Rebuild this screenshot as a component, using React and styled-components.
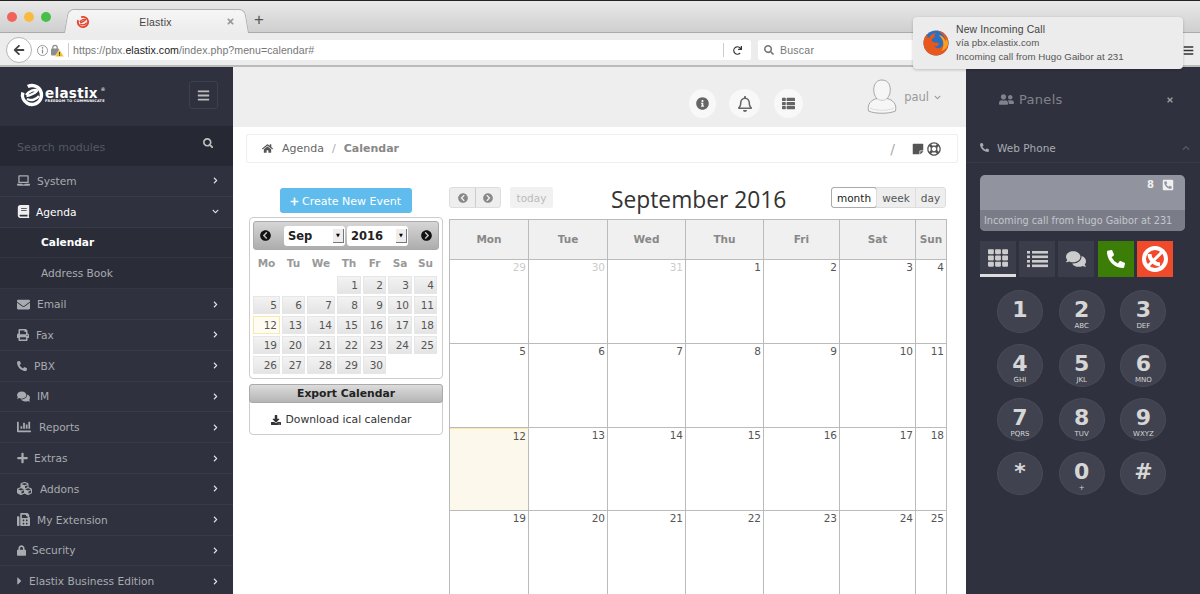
import React from "react";
import styled, { createGlobalStyle } from "styled-components";
import { FaInfoCircle, FaRegBell, FaThList, FaHome, FaLaptop, FaBook, FaEnvelope, FaPrint, FaPhoneAlt, FaComments, FaChartBar, FaPlus, FaCubes, FaLock, FaCaretRight, FaChevronRight, FaChevronDown, FaChevronUp, FaSearch, FaBars, FaUserFriends, FaTimes, FaStickyNote, FaRegLifeRing, FaDownload, FaArrowLeft, FaRedo, FaTh, FaChevronCircleLeft, FaChevronCircleRight, FaPhoneSquareAlt, FaFax } from "react-icons/fa";

const GlobalStyle = createGlobalStyle`
  html, body { margin: 0; padding: 0; height: 594px; overflow: hidden; background: #fff; }
  body { font-family: "DejaVu Sans", Verdana, sans-serif; }
  * { box-sizing: border-box; }
`;

const Page = styled.div`
  width: 1200px; height: 594px; overflow: hidden; display: flex; flex-direction: column; position: relative;
`;
const TabStrip = styled.div`
  height: 33px; flex: none; display: flex; align-items: flex-end; padding-left: 7px;
  background: linear-gradient(#e9e9e9, #cfcfcf); border-top: 1px solid #222; border-bottom: 1px solid #aaa;
`;
const Lights = styled.div`
  display: flex; gap: 7px; align-self: center; margin-right: 19px;
`;
const Light = styled.span`
  width: 10px; height: 10px; border-radius: 50%; background: ${p => p.$c};
`;
const Tab = styled.div`
  width: 173px; height: 24px; margin-bottom: -1px; display: flex; align-items: center; padding: 0 8px 0 6px; position: relative;
  background: linear-gradient(#f6f6f6, #ececec); border-top: 1px solid #b0b0b0; border-radius: 7px 7px 0 0;
  font: 10.5px "Liberation Sans", sans-serif; color: #444;
  &::before, &::after {
    content: ""; position: absolute; top: -1px; bottom: 0; width: 10px; background: linear-gradient(#f6f6f6, #ececec);
    border-top: 1px solid #b0b0b0;
  }
  &::before { left: -4px; transform: skewX(-10deg); border-left: 1px solid #b0b0b0; border-radius: 6px 0 0 0; }
  &::after { right: -4px; transform: skewX(10deg); border-right: 1px solid #b0b0b0; border-radius: 0 6px 0 0; }
`;
const TabIcon = styled.span` display: flex; position: relative; z-index: 1; `;
const TabTitle = styled.span` flex: 1; text-align: center; padding-right: 5px; letter-spacing: .2px; position: relative; z-index: 1; `;
const TabClose = styled.span` color: #999; font-size: 9px; display: flex; position: relative; z-index: 1; `;
const NewTab = styled.span` margin: 0 0 3px 11px; font: 17px "Liberation Sans", sans-serif; color: #555; line-height: 18px; `;
const UrlBar = styled.div`
  height: 34px; flex: none; display: flex; align-items: center; padding: 2px 6px 0; color: #444;
  background: #ececec; border-bottom: 2px solid #bbb;
`;
const BackBtn = styled.div`
  width: 26px; height: 26px; border-radius: 50%; background: #fff; border: 1px solid #b5b5b5; display: flex; align-items: center; justify-content: center; font-size: 12px; color: #444; flex: none; z-index: 1;
`;
const Addr = styled.div`
  width: 725px; height: 20px; margin-left: -6px; background: #fff; display: flex; align-items: center; padding-left: 11px; border-radius: 0 2px 2px 0;
  font: 10.6px "Liberation Sans", sans-serif; color: #777; letter-spacing: .05px; flex: none;
`;
const SiteIcons = styled.span` display: flex; align-items: center; gap: 3px; `;
const LockWrap = styled.span` display: flex; width: 13px; position: relative; `;
const AddrSep = styled.span` width: 1px; height: 14px; background: #ccc; margin: 0 4px 0 4px; `;
const Strong = styled.span` color: #222; `;
const Reload = styled.span` margin-left: auto; display: flex; align-items: center; height: 14px; padding: 0 9px; border-left: 1px solid #ccc; font-size: 9px; color: #333; `;
const SearchBox = styled.div`
  width: 240px; height: 20px; margin-left: 7px; background: #fff; border-radius: 2px; display: flex; align-items: center; gap: 6px; padding-left: 6px; flex: none;
  font: 10.6px "Liberation Sans", sans-serif; color: #777; letter-spacing: .2px;
`;
const MoreMenu = styled.span` margin-left: auto; display: flex; font-size: 11px; color: #333; `;

const Body = styled.div` flex: 1; display: flex; min-height: 0; `;
const Sidebar = styled.aside` width: 233px; flex: none; background: #2f323e; display: flex; flex-direction: column; `;
const LogoRow = styled.div` height: 59px; flex: none; display: flex; align-items: center; justify-content: space-between; padding: 0 15px 3px 19px; `;
const Logo = styled.div` display: flex; align-items: center; gap: 0; color: #fff; `;
const LogoText = styled.div` display: flex; flex-direction: column; font-weight: 700; font-size: 13.5px; line-height: 12px; letter-spacing: .3px; position: relative; `;
const LogoSub = styled.span` font-size: 3.5px; line-height: 4px; letter-spacing: .15px; `;
const LogoReg = styled.sup` position: absolute; right: -1px; top: 0; font-size: 5px; font-weight: 400; line-height: 5px; `;
const Burger = styled.div` width: 29px; height: 28px; border: 1px solid #3d414d; border-radius: 3px; display: flex; align-items: center; justify-content: center; color: #bbb; font-size: 13px; `;
const SearchRow = styled.div` height: 40px; flex: none; background: #262933; display: flex; align-items: center; justify-content: space-between; padding: 3px 20px 0 17px; font-size: 11px; color: #555963; `;
const SearchIcon = styled.span` color: #c0c0c0; font-size: 10.5px; display: flex; margin-top: -9px; `;
const MenuRow = styled.div`
  height: 30.8px; flex: none; display: flex; align-items: center; padding: 0 14px 0 17px; font-size: 10.6px;
  color: ${p => p.$active ? "#fff" : "#a9abb0"}; border-bottom: 1px solid #383b47; background: #2f323e;
`;
const MenuIcon = styled.span`
  display: flex; justify-content: flex-start; flex: none; width: ${p => p.$w || 13}px; font-size: ${p => p.$s || 13}px; margin-right: ${p => p.$gap ?? 7}px;
  color: ${p => p.$active ? "#eee" : "#a9abb0"};
`;
const MenuLabel = styled.span` flex: 1; `;
const MenuArrow = styled.span` display: flex; font-size: 7px; color: #e8e8e8; `;
const SubRow = styled.div`
  height: 30.8px; flex: none; display: flex; align-items: center; padding-left: 41px; font-size: 10.6px; font-weight: ${p => p.$active ? 700 : 400};
  color: ${p => p.$active ? "#fff" : "#a9abb0"}; background: #2a2d38; border-bottom: 1px solid #343742;
`;

const Main = styled.main` width: 733px; flex: none; display: flex; flex-direction: column; background: #fff; min-height: 0; overflow: hidden; `;
const TopBar = styled.div` height: 60px; flex: none; background: #eee; display: flex; align-items: flex-start; justify-content: flex-end; padding: 22px 25px 0 0; `;
const RoundBtn = styled.div` width: ${p => p.$d || 29}px; height: 29px; border-radius: 50%; background: #f8f8f8; display: flex; align-items: center; justify-content: center; color: #666; font-size: 13px; margin-right: ${p => p.$mr || 0}px; flex: none; `;
const UserBlock = styled.div` display: flex; align-items: flex-start; margin-top: -10px; color: #999; font-size: 11.5px; gap: 7px; `;
const UserName = styled.span` display: flex; align-items: center; gap: 5px; padding-top: 11px; `;
const Crumbs = styled.div`
  height: 29px; flex: none; margin: 7px 0 0 13px; width: 712px; background: #fff; border: 1px solid #eee; border-radius: 2px;
  display: flex; align-items: center; padding: 0 16px 0 15px; font-size: 11px; color: #666;
`;
const HomeIcon = styled.span` display: flex; font-size: 11px; color: #555; margin-right: 9px; `;
const CrumbSep = styled.span` margin: 0 8px; color: #aaa; `;
const CrumbStrong = styled.span` font-weight: 700; color: #888; `;
const CrumbTools = styled.span` margin-left: auto; display: flex; align-items: center; gap: 3px; color: #555; font-size: 12px; `;
const CrumbSlash = styled.span` color: #aaa; font-size: 14px; margin-right: 14px; `;
const Content = styled.div` flex: 1; display: flex; padding: 24px 0 0 16px; min-height: 0; `;
const LeftCol = styled.div` width: 194px; flex: none; display: flex; flex-direction: column; align-items: center; padding-top: 1px; `;
const CreateBtn = styled.div`
  width: 132px; height: 25px; padding-top: 1px; margin-right: 1px; background: #5fbcec; border-radius: 3px; color: #fff; font-size: 11px; display: flex; align-items: center; justify-content: center; gap: 3px; font-weight: 500;
`;
const MiniCal = styled.div`
  margin-top: 4px; width: 194px; height: 162px; border: 1px solid #ccc; border-radius: 4px; padding: 3px; background: #fff;
`;
const MiniHead = styled.div`
  height: 29px; display: flex; align-items: center; justify-content: space-between; padding: 0 6px; border: 1px solid #aaa; border-radius: 3px; background: linear-gradient(#d6d6d6, #adadad); font-size: 12px;
`;
const MiniSelects = styled.div` display: flex; gap: 2px; `;
const MiniSelect = styled.div`
  width: 61px; height: 20px; background: #fff; border-radius: 3px; font-weight: 700; font-size: 11.5px; color: #222; display: flex; align-items: center; justify-content: space-between; padding: 0 1px 0 4px;
`;
const Spin = styled.span`
  width: 11px; height: 14px; background: #eee; border-right: 1px solid #777; border-bottom: 1px solid #777; display: flex; align-items: center; justify-content: center; font-size: 5px; color: #000;
`;
const MiniGrid = styled.div`
  display: grid; grid-template-columns: 29px 25px 30px 26px 25px 26px 25px; margin-top: 2px;
`;
const MiniDow = styled.div` height: 24px; padding: 0 2px 2px 0; display: flex; align-items: center; justify-content: center; font-size: 10.5px; font-weight: 700; color: #999; `;
const MiniDay = styled.div`
  height: 18px; margin: 0 2px 2px 0; display: flex; align-items: center; justify-content: flex-end; padding-right: 2px; font-size: 10.5px; color: #555;
  background: ${p => p.$today ? "#fffdf3" : p.$empty ? "transparent" : "linear-gradient(#f3f3f3,#e4e4e4)"};
  border: 1px solid ${p => p.$today ? "#fbe7a8" : p.$empty ? "transparent" : "#e6e6e6"};
`;
const ExportBox = styled.div` margin-top: 5px; width: 194px; height: 51px; border: 1px solid #ccc; border-radius: 4px; display: flex; flex-direction: column; `;
const ExportHead = styled.div` height: 19px; margin: -1px -1px 0; flex: none; display: flex; align-items: center; justify-content: center; border: 1px solid #aaa; border-radius: 3px; background: linear-gradient(#dcdcdc, #b5b5b5); font-size: 10.8px; font-weight: 700; color: #222; `;
const ExportLink = styled.div` flex: 1; display: flex; align-items: center; justify-content: center; gap: 4px; padding: 2px 9px 0 0; font-size: 10.8px; color: #333; `;

const CalCol = styled.div` width: 498px; flex: none; margin-left: 6px; display: flex; flex-direction: column; min-height: 0; `;
const CalToolbar = styled.div` height: 32px; flex: none; display: flex; align-items: flex-start; `;
const NavGroup = styled.div` display: flex; height: 21px; border: 1px solid #ddd; border-radius: 3px; background: #eee; margin-right: 9px; `;
const NavBtn = styled.div` width: 25px; display: flex; align-items: center; justify-content: center; color: #888; font-size: 10px; & + & { border-left: 1px solid #ccc; } `;
const TodayBtn = styled.div` width: 43px; height: 21px; background: #f1f1f1; border-radius: 2px; color: #bbb; font-size: 10.5px; display: flex; align-items: center; justify-content: center; `;
const CalTitle = styled.div` margin-left: 58px; font: 22.8px/26px "Open Sans", sans-serif; color: #333; white-space: nowrap; `;
const ViewGroup = styled.div` margin-left: auto; margin-right: 1px; display: flex; height: 21px; border: 1px solid #ddd; border-radius: 3px; background: #eee; font-size: 10.5px; color: #555; `;
const ViewBtn = styled.div`
  display: flex; align-items: center; justify-content: center; width: ${p => p.$w}px; background: ${p => p.$on ? "#fff" : "transparent"};
  color: ${p => p.$on ? "#222" : "#555"}; ${p => p.$on && "outline: 1px solid #aaa; border-radius: 2px;"}
  & + & { border-left: 1px solid #ddd; }
`;
const CalGrid = styled.div`
  flex: none; display: grid; grid-template-columns: 79px 79px 78px 78px 76px 76px 31px; grid-template-rows: 40px 84px 84px 83px 84px;
  border-left: 1px solid #bbb; border-top: 1px solid #bbb; width: 498px;
`;
const HeadCell = styled.div`
  background: #f0f0f0; border-right: 1px solid #bbb; border-bottom: 1px solid #bbb; padding-bottom: 2px; display: flex; align-items: center; justify-content: center; font-size: 10.5px; font-weight: 700; color: #888;
`;
const DayCell = styled.div`
  border-right: 1px solid #bbb; border-bottom: 1px solid #bbb; text-align: right; padding: 1px 2px 0 0; font-size: 10.5px; color: ${p => p.$other ? "#ccc" : "#555"};
  background: ${p => p.$today ? "#fcf8ec" : "#fff"}; ${p => p.$today && "border-top: 1px solid #fbe7a8;"}
`;

const Panel = styled.aside` width: 234px; flex: none; background: #2f323e; display: flex; flex-direction: column; padding-left: 14px; `;
const PanelHead = styled.div` height: 65px; flex: none; display: flex; align-items: center; padding: 0 26px 0 19px; color: #80838b; font-size: 13px; gap: 5px; `;
const PanelTitle = styled.span` flex: 1; letter-spacing: .3px; `;
const PanelClose = styled.span` display: flex; font-size: 8px; color: #999; `;
const PhoneHead = styled.div` height: 31px; margin-left: -14px; flex: none; display: flex; align-items: center; padding: 1px 10px 0 14px; color: #a9abb0; font-size: 10.5px; gap: 8px; border-bottom: 1px solid #383b47; `;
const PhoneChevron = styled.span` margin-left: auto; display: flex; font-size: 8px; color: #555963; `;
const Screen = styled.div`
  margin-top: 12px; width: 205px; height: 56px; border-radius: 5px; background: #91949e; display: flex; flex-direction: column; color: #f0f0f0; overflow: hidden;
`;
const ScreenTop = styled.div` flex: 1; display: flex; justify-content: flex-end; align-items: flex-start; gap: 8px; padding: 4px 11px 0; font-weight: 700; font-size: 10px; `;
const ScreenBottom = styled.div` height: 21px; background: #7a7d88; color: #c4c6cc; font-size: 9.7px; padding-left: 4px; display: flex; align-items: center; white-space: nowrap; `;
const ActionRow = styled.div` margin-top: 10px; display: flex; gap: 3px; `;
const ActionBtn = styled.div`
  width: 36px; height: 36px; display: flex; align-items: center; justify-content: center; background: ${p => p.$bg || "#3b3e4a"}; color: ${p => p.$c || "#ccc"}; font-size: ${p => p.$s || 18}px; flex: none;
  margin-left: ${p => p.$ml || 0}px;
  ${p => p.$on && "border-bottom: 3px solid #ddd;"}
`;
const Keypad = styled.div` margin-top: 13px; margin-left: 17px; display: grid; grid-template-columns: repeat(3, 46px); gap: 11px 15.7px; `;
const Key = styled.div`
  width: 46px; height: 43px; border-radius: 50%; background: #40434f; border: 1px solid #484b57; display: flex; flex-direction: column; align-items: center; justify-content: flex-start; color: #d6d6d6; font-weight: 700; font-size: 22px; line-height: 24px; padding-top: 7px;
`;
const KeySub = styled.span` font-size: 7px; line-height: 7px; font-weight: 400; margin-top: 1px; `;

const Notice = styled.div`
  position: absolute; left: 913px; top: 17px; width: 270px; height: 52px; background: #ececec; border-radius: 4px; box-shadow: 0 1px 3px rgba(0,0,0,.2);
  display: flex; align-items: center; padding-left: 10px; gap: 7px; font: 9.7px "Liberation Sans", sans-serif; color: #555;
`;
const NoticeText = styled.div` display: flex; flex-direction: column; line-height: 13.5px; letter-spacing: .05px; `;
const NoticeTitle = styled.span` font-size: 10.4px; color: #444; letter-spacing: .15px; `;

const FoxLogo = () => (
  <svg width="26" height="26" viewBox="0 0 26 26">
    <circle cx="13" cy="13" r="12.5" fill="#2a6fc0" />
    <path d="M13 .5 C20 .5 25.5 6 25.5 13 C25.5 20 20 25.5 13 25.5 C6 25.5 .5 20 .5 13 C.5 9 2 6 4 4 C4 7 5 8 6 8 C7 5 10 3.5 13 3 C11 5 11 6 12 7 C9 8 8 10 9 11 C10 13 13 12 16 13 C16 16 13 17 11 16 C13 19 18 19 20 15 C21 11 19 7 16 5 C20 6 22 9 22.5 11 C22 6 18 1.5 13 .5Z" fill="#e8581c" />
    <path d="M16 5 C20 6 22 9 22.5 12 C22 8 25 9 25 13 C25 17 22 20 18 21 C21 18 21 12 19 9Z" fill="#f7a11e" />
  </svg>
);
const ElxMark = ({ size = 26, color = "#fff" }) => (
  <svg width={size} height={size} viewBox="0 0 26 26" fill="none">
    <circle cx="13" cy="13" r="9.5" stroke={color} strokeWidth="3.4" strokeDasharray="42 8" transform="rotate(-60 13 13)" />
    <path d="M7.5 14 C11 14 18 10 18 8.5 C16 7 10 9 7 13 M8 17 C12 19 17 18 20 14" stroke={color} strokeWidth="2.4" />
  </svg>
);
const UserAvatar = () => (
  <svg width="30" height="35" viewBox="0 0 30 35">
    <path d="M1.5 32 C0 25 4 21 10 19.5 C5 15 5 1 15 1 C25 1 25 15 20 19.5 C26 21 30 25 28.5 32 C22 35 8 35 1.5 32Z" fill="#f6f6f6" stroke="#a5a5a5" strokeWidth="1" />
    <path d="M10 19.5 C13 22 17 22 20 19.5" stroke="#ccc" fill="none" />
    <path d="M3 29 C8 32 22 32 27 29" stroke="#ddd" fill="none" />
  </svg>
);
const InfoOutline = () => (
  <svg width="11" height="11" viewBox="0 0 11 11" fill="none">
    <circle cx="5.5" cy="5.5" r="5" stroke="#999" />
    <path d="M5.5 4.6 V8.4" stroke="#888" strokeWidth="1.2" />
    <circle cx="5.5" cy="2.9" r=".8" fill="#888" />
  </svg>
);
const LockWarn = () => (
  <svg width="13" height="13" viewBox="0 0 13 13">
    <rect x="0" y="4.5" width="8" height="7" rx="1" fill="#8c8c8c" />
    <path d="M1.8 5 V3.5 a2.2 2.2 0 0 1 4.4 0 V5" fill="none" stroke="#8c8c8c" strokeWidth="1.2" />
    <path d="M8.5 5.5 L13 12.8 H4 Z" fill="#f4c025" stroke="#fff" strokeWidth=".5" />
    <path d="M8.5 8 V10.6 M8.5 11.2 V12" stroke="#333" strokeWidth=".9" />
  </svg>
);
const ListRows = () => (
  <svg width="21" height="18" viewBox="0 0 21 18" fill="#ccc">
    {[1, 5.5, 10, 14.5].map(y => (
      <g key={y}><rect x="0" y={y} width="3" height="2.6" /><rect x="5" y={y} width="16" height="2.6" /></g>
    ))}
  </svg>
);
const HangUp = () => (
  <svg width="28" height="28" viewBox="0 0 28 28" fill="none" stroke="#fff">
    <circle cx="14" cy="14" r="11" strokeWidth="4" />
    <path d="M21 7 L7 21" strokeWidth="3" />
    <path d="M8.5 9 C8.5 14 13 19 19 19.5" strokeWidth="4" />
  </svg>
);

const menu = [
  ["Email", FaEnvelope, 13, 13, 7], ["Fax", FaPrint, 12, 12, 7], ["PBX", FaPhoneAlt, 10, 10, 7], ["IM", FaComments, 13, 13, 7], ["Reports", FaChartBar, 15, 14, 7],
  ["Extras", FaPlus, 11, 12, 6], ["Addons", FaCubes, 16, 15, 7], ["My Extension", FaFax, 13, 13, 7], ["Security", FaLock, 9, 11, 6], ["Elastix Business Edition", FaCaretRight, 5, 12, 7],
];
const heads = ["Mon", "Tue", "Wed", "Thu", "Fri", "Sat", "Sun"];
const weeks = [[29,30,31,1,2,3,4],[5,6,7,8,9,10,11],[12,13,14,15,16,17,18],[19,20,21,22,23,24,25]];
const miniDays = [0,0,0,1,2,3,4,5,6,7,8,9,10,11,12,13,14,15,16,17,18,19,20,21,22,23,24,25,26,27,28,29,30];
const keys = [["1",""],["2","ABC"],["3","DEF"],["4","GHI"],["5","JKL"],["6","MNO"],["7","PQRS"],["8","TUV"],["9","WXYZ"],["*",""],["0","+"],["#",""]];

export default function App() {
  return (
    <Page>
      <GlobalStyle />
      <TabStrip>
        <Lights><Light $c="#f0635a" /><Light $c="#f9bb3e" /><Light $c="#46bf48" /></Lights>
        <Tab>
          <TabIcon><ElxMark size={14} color="#e5442b" /></TabIcon>
          <TabTitle>Elastix</TabTitle>
          <TabClose><FaTimes /></TabClose>
        </Tab>
        <NewTab>+</NewTab>
      </TabStrip>
      <UrlBar>
        <BackBtn><FaArrowLeft /></BackBtn>
        <Addr>
          <SiteIcons>
            <InfoOutline />
            <LockWrap><LockWarn /></LockWrap>
          </SiteIcons>
          <AddrSep />
          <span>https://pbx.<Strong>elastix.com</Strong>/index.php?menu=calendar#</span>
          <Reload><FaRedo /></Reload>
        </Addr>
        <SearchBox><FaSearch size={10} color="#777" /> Buscar</SearchBox>
        <MoreMenu><FaBars /></MoreMenu>
      </UrlBar>
      <Body>
        <Sidebar>
          <LogoRow>
            <Logo>
              <ElxMark size={26} />
              <LogoText>elastix<LogoSub>FREEDOM TO COMMUNICATE</LogoSub><LogoReg>®</LogoReg></LogoText>
            </Logo>
            <Burger><FaBars /></Burger>
          </LogoRow>
          <SearchRow>Search modules<SearchIcon><FaSearch /></SearchIcon></SearchRow>
          <MenuRow>
            <MenuIcon><FaLaptop /></MenuIcon><MenuLabel>System</MenuLabel><MenuArrow><FaChevronRight /></MenuArrow>
          </MenuRow>
          <MenuRow $active>
            <MenuIcon $active $gap={6}><FaBook /></MenuIcon><MenuLabel>Agenda</MenuLabel><MenuArrow><FaChevronDown /></MenuArrow>
          </MenuRow>
          <SubRow $active>Calendar</SubRow>
          <SubRow>Address Book</SubRow>
          {menu.map(([label, Icon, w, s, gap]) => (
            <MenuRow key={label}>
              <MenuIcon $w={w} $s={s} $gap={gap}><Icon /></MenuIcon><MenuLabel>{label}</MenuLabel><MenuArrow><FaChevronRight /></MenuArrow>
            </MenuRow>
          ))}
        </Sidebar>
        <Main>
          <TopBar>
            <RoundBtn $d={27} $mr={13}><FaInfoCircle /></RoundBtn>
            <RoundBtn $d={31} $mr={14}><FaRegBell size={16} /></RoundBtn>
            <RoundBtn $mr={64}><FaThList /></RoundBtn>
            <UserBlock><UserAvatar /><UserName>paul <FaChevronDown size={7} /></UserName></UserBlock>
          </TopBar>
          <Crumbs>
            <HomeIcon><FaHome /></HomeIcon>
            Agenda<CrumbSep>/</CrumbSep><CrumbStrong>Calendar</CrumbStrong>
            <CrumbTools><CrumbSlash>/</CrumbSlash><FaStickyNote /><FaRegLifeRing size={14} /></CrumbTools>
          </Crumbs>
          <Content>
            <LeftCol>
              <CreateBtn><FaPlus size={9} /> Create New Event</CreateBtn>
              <MiniCal>
                <MiniHead>
                  <FaChevronCircleLeft size={11} color="#111" />
                  <MiniSelects>
                    <MiniSelect>Sep<Spin>▼</Spin></MiniSelect>
                    <MiniSelect>2016<Spin>▼</Spin></MiniSelect>
                  </MiniSelects>
                  <FaChevronCircleRight size={11} color="#111" />
                </MiniHead>
                <MiniGrid>
                  {["Mo","Tu","We","Th","Fr","Sa","Su"].map(d => <MiniDow key={d}>{d}</MiniDow>)}
                  {miniDays.map((d, i) => <MiniDay key={i} $empty={!d} $today={d === 12}>{d || ""}</MiniDay>)}
                </MiniGrid>
              </MiniCal>
              <ExportBox>
                <ExportHead>Export Calendar</ExportHead>
                <ExportLink><FaDownload size={10} /> Download ical calendar</ExportLink>
              </ExportBox>
            </LeftCol>
            <CalCol>
              <CalToolbar>
                <NavGroup><NavBtn><FaChevronCircleLeft /></NavBtn><NavBtn><FaChevronCircleRight /></NavBtn></NavGroup>
                <TodayBtn>today</TodayBtn>
                <CalTitle>September 2016</CalTitle>
                <ViewGroup>
                  <ViewBtn $on $w={44}>month</ViewBtn><ViewBtn $w={39}>week</ViewBtn><ViewBtn $w={30}>day</ViewBtn>
                </ViewGroup>
              </CalToolbar>
              <CalGrid>
                {heads.map(h => <HeadCell key={h}>{h}</HeadCell>)}
                {weeks.flat().map((d, i) => <DayCell key={i} $other={i < 3} $today={d === 12}>{d}</DayCell>)}
              </CalGrid>
            </CalCol>
          </Content>
        </Main>
        <Panel>
          <PanelHead><FaUserFriends size={15} /><PanelTitle>Panels</PanelTitle><PanelClose><FaTimes /></PanelClose></PanelHead>
          <PhoneHead><FaPhoneAlt size={9} />Web Phone<PhoneChevron><FaChevronUp /></PhoneChevron></PhoneHead>
          <Screen>
            <ScreenTop>8 <FaPhoneSquareAlt size={12} /></ScreenTop>
            <ScreenBottom>Incoming call from Hugo Gaibor at 231</ScreenBottom>
          </Screen>
          <ActionRow>
            <ActionBtn $on $s={20}><FaTh /></ActionBtn>
            <ActionBtn><ListRows /></ActionBtn>
            <ActionBtn $s={20}><FaComments /></ActionBtn>
            <ActionBtn $bg="#3b7d07" $c="#fff" $ml={1}><FaPhoneAlt /></ActionBtn>
            <ActionBtn $bg="#ef4a2b" $c="#fff"><HangUp /></ActionBtn>
          </ActionRow>
          <Keypad>
            {keys.map(([k, s]) => <Key key={k}>{k}{s && <KeySub>{s}</KeySub>}</Key>)}
          </Keypad>
        </Panel>
      </Body>
      <Notice>
        <FoxLogo />
        <NoticeText>
          <NoticeTitle>New Incoming Call</NoticeTitle>
          <span>vía pbx.elastix.com</span>
          <span>Incoming call from Hugo Gaibor at 231</span>
        </NoticeText>
      </Notice>
    </Page>
  );
}
